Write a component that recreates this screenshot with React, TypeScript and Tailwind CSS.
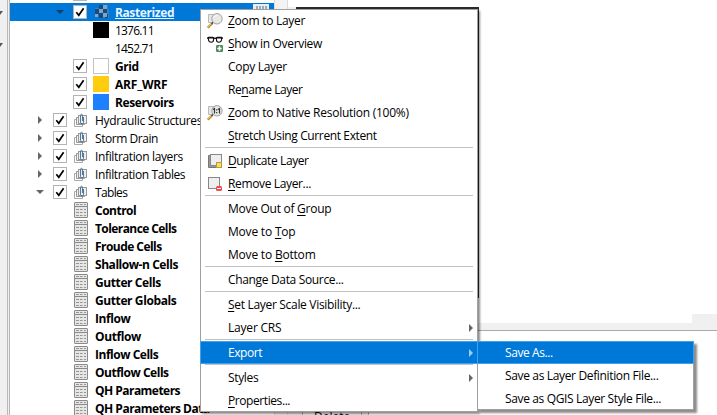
import React from "react";

type IconName = "zoom" | "glasses" | "native" | "duplicate" | "remove";

const SANS = "font-['Open_Sans','Noto_Sans',sans-serif]";

function Check() {
  return (
    <svg width="14" height="14" viewBox="0 0 14 14" className="block shrink-0">
      <rect x=".5" y=".5" width="13" height="13" fill="#fff" stroke="#b4b4b4" />
      <path d="M3.3 7.2 5.8 10.3 10.6 3.3" fill="none" stroke="#000" strokeWidth="1.7" />
    </svg>
  );
}

function RasterIcon() {
  return (
    <svg width="14" height="14" viewBox="0 0 14 14" shapeRendering="crispEdges" className="block">
      <path d="M0 3h4V0h9v4h1v9H4v-4H0z" fill="#3482c4" />
      <path d="M4 0h4v4H4zM0 4h4v5H0zM8 4h4v4H8zM4 8h4v5H4zM10 9h3v4h-3z" fill="#1d4877" />
      <path d="M8 0h4v4H8zM4 4h4v4H4zM8 8h4v4H8zM0 9h3v3H0z" fill="#76a8d0" />
    </svg>
  );
}

function GroupIcon() {
  return (
    <svg width="13" height="15" viewBox="0 0 13 15" className="block">
      <path d="M2 6.500H.5v7h8V12" fill="none" stroke="#aaa" />
      <path d="M4 4.500H2.500v7h8V10" fill="#eee" stroke="#999" />
      <rect x="4.500" y="2.500" width="8" height="8" fill="#eeeeec" stroke="#999" />
      <path d="M9.500 4v5.500c0 2-3 2-3 0V3c0-2.500 2-2.500 2 0v5" fill="none" stroke="#3f6a92" strokeWidth=".9" />
    </svg>
  );
}

function TableIcon() {
  return (
    <svg width="14" height="16" viewBox="0 0 14 16" className="block">
      <rect x=".5" y=".5" width="13" height="15" rx=".5" fill="#e6e6e4" stroke="#8a8a8a" />
      <path d="M1 4.500h12" stroke="#8a8a8a" />
      <path d="M2 2.500h3M6 2.500h2.500M10 2.500h2M2 7.500h3M6 7.500h2.500M10 7.500h2M2 10.500h3M6 10.500h2.500M10 10.500h2M2 13.500h3M6 13.500h2.500M10 13.500h2" stroke="#959595" />
    </svg>
  );
}

function MenuIcon({ name }: { name: IconName }) {
  return (
    <svg width="16" height="16" viewBox="0 0 16 16" className="block">
      {(name === "zoom" || name === "native") && (
        <>
          <path d="M1.500 1.500h6v8h-6z" fill="#e8e8e6" stroke="#b8b8b6" />
          <path d="M.8 14.700 5 10.500" stroke="#b98f24" strokeWidth="2.300" />
          <path d="M1 14 4.500 10.500" stroke="#f0c94f" strokeWidth=".9" />
          <path d="M4.500 11 6.500 9" stroke="#444" strokeWidth="1.500" />
          <circle cx="10" cy="5.800" r="5.200" fill="#e7e7e5" fillOpacity=".95" stroke="#a2a2a0" />
        </>
      )}
      {name === "zoom" && <path d="M6.500 5.500c.3-2 1.700-3 3.500-3" fill="none" stroke="#fff" />}
      {name === "native" && (
        <path d="M6 4.500 7.500 3.500v5M11 4.500l1.500-1v5M9.700 4.300v1.200M9.700 7v1.200" fill="none" stroke="#333" strokeWidth="1.200" />
      )}
      {name === "glasses" && (
        <>
          <path d="M0 2.500 1.500 1.500h4.200l2.300 1 2.300-1h4.200L16 2.500" fill="none" stroke="#111" strokeWidth="1.300" />
          <path d="M1.500 2h5v2c0 3-4.500 3-5 0zM9.500 2h5v2c-.5 3-5 3-5 0z" fill="#fff" stroke="#111" strokeWidth="1.100" />
          <rect x="9" y="9" width="7" height="7" rx="1.200" fill="#508a5c" />
          <path d="M12.500 10.300v4.400M10.300 12.500h4.400" stroke="#fff" strokeWidth="1.600" />
        </>
      )}
      {name === "duplicate" && (
        <>
          <path d="M3.500 2.500h-2v12h11v-2" fill="#999" stroke="#777" />
          <rect x="3.500" y="1.500" width="11" height="11" fill="#eee" stroke="#878787" />
          <rect x="9.500" y="9.500" width="5" height="5" fill="#f3dc78" stroke="#c29b27" />
        </>
      )}
      {name === "remove" && (
        <>
          <rect x="1.500" y="1.500" width="11" height="11" fill="#eee" stroke="#878787" />
          <rect x="9" y="10" width="6" height="5" rx="1.500" fill="#ee4a50" />
          <path d="M10 12.500h4" stroke="#fff" />
        </>
      )}
    </svg>
  );
}

function Caret({ open, dark }: { open?: boolean; dark?: boolean }) {
  return (
    <svg width="8" height="8" viewBox="0 0 8 8" className="block">
      <path d={open ? "M0 2h8L4 6z" : "M2 0v8l4-4z"} fill={dark ? "#123e67" : "#666"} />
    </svg>
  );
}

type LayerRowProps = { icon: React.ReactNode; name: string; selected?: boolean; bold?: boolean; track: string };

function LayerRow({ icon, name, selected, bold, track }: LayerRowProps) {
  return (
    <div className={`flex h-[18px] shrink-0 items-center ${selected ? "bg-[#0078d7] text-[#e8f4ff]" : ""}`}>
      <div className="flex w-[63px] shrink-0 pl-[46px]">{selected && <Caret open dark />}</div>
      <div className="w-[20px]">{bold && <Check />}</div>
      <div className="flex w-[22px] items-center">{icon}</div>
      <span className={`pt-[2px] ${bold ? "font-bold" : ""} ${selected ? "underline" : ""} ${track}`}>{name}</span>
    </div>
  );
}

function GroupRow({ name, open, track }: { name: string; open?: boolean; track: string }) {
  return (
    <div className="flex h-[18px] shrink-0 items-center">
      <div className="w-[43px] pl-[26px]"><Caret open={open} /></div>
      <div className="w-[21px]"><Check /></div>
      <div className="w-[21px]"><GroupIcon /></div>
      <span className={`pt-[2px] ${track}`}>{name}</span>
    </div>
  );
}

const tables: [string, string][] = [
  ["Control", "tracking-[-0.5px]"],
  ["Tolerance Cells", "tracking-[-0.58px]"],
  ["Froude Cells", "tracking-[-0.55px]"],
  ["Shallow-n Cells", "tracking-[-0.45px]"],
  ["Gutter Cells", "tracking-[-0.4px]"],
  ["Gutter Globals", "tracking-[-0.4px]"],
  ["Inflow", "tracking-[-0.4px]"],
  ["Outflow", "tracking-[-0.4px]"],
  ["Inflow Cells", "tracking-[-0.48px]"],
  ["Outflow Cells", "tracking-[-0.48px]"],
  ["QH Parameters", "tracking-[-0.53px]"],
  ["QH Parameters Data", "tracking-[-0.5px]"],
];

function Swatch({ color }: { color: string }) {
  return <div className={`size-4 ${color}`} />;
}

function LayerTree() {
  return (
    <div className="flex w-[264px] shrink-0 flex-col overflow-hidden bg-white">
      <div className="h-[3px] shrink-0 pl-[63px]"><div className="h-px w-[14px] bg-[#b4b4b4]" /></div>
      <LayerRow selected bold icon={<div className="pl-[2px]"><RasterIcon /></div>} name="Rasterized" track="tracking-[-0.4px]" />
      <LayerRow icon={<Swatch color="bg-black" />} name="1376.11" track="tracking-[-0.8px]" />
      <LayerRow icon={null} name="1452.71" track="tracking-[-0.8px]" />
      <LayerRow bold icon={<Swatch color="border border-[#c3c3c3] bg-white" />} name="Grid" track="tracking-[-0.4px]" />
      <LayerRow bold icon={<Swatch color="bg-[#ffcd10]" />} name="ARF_WRF" track="tracking-[-0.2px]" />
      <LayerRow bold icon={<Swatch color="bg-[#1f80ff]" />} name="Reservoirs" track="tracking-[-0.4px]" />
      <GroupRow name="Hydraulic Structures" track="tracking-[-0.34px]" />
      <GroupRow name="Storm Drain" track="tracking-[-0.45px]" />
      <GroupRow name="Infiltration layers" track="tracking-[-0.36px]" />
      <GroupRow name="Infiltration Tables" track="tracking-[-0.4px]" />
      <GroupRow name="Tables" open track="tracking-[-0.65px]" />
      {tables.map(([name, track]) => (
        <div key={name} className="flex h-[18px] shrink-0 items-center">
          <div className="w-[85px] pl-[64px]"><TableIcon /></div>
          <span className={`pt-[2px] font-bold ${track}`}>{name}</span>
        </div>
      ))}
    </div>
  );
}

type Entry = { label: string; accel?: string; icon?: IconName; arrow?: boolean; active?: boolean; track?: string };

const groups: Entry[][] = [
  [
    { label: "Zoom to Layer", accel: "Z", icon: "zoom", track: "tracking-[-0.28px]" },
    { label: "Show in Overview", accel: "S", icon: "glasses", track: "tracking-[-0.32px]" },
    { label: "Copy Layer", track: "tracking-[-0.3px]" },
    { label: "Rename Layer", accel: "n", track: "tracking-[-0.43px]" },
    { label: "Zoom to Native Resolution (100%)", accel: "Z", icon: "native", track: "tracking-[-0.26px]" },
    { label: "Stretch Using Current Extent", accel: "S", track: "tracking-[-0.38px]" },
  ],
  [
    { label: "Duplicate Layer", accel: "D", icon: "duplicate", track: "tracking-[-0.4px]" },
    { label: "Remove Layer...", accel: "R", icon: "remove", track: "tracking-[-0.36px]" },
  ],
  [
    { label: "Move Out of Group", accel: "G", track: "tracking-[-0.27px]" },
    { label: "Move to Top", accel: "T" },
    { label: "Move to Bottom", accel: "B" },
  ],
  [{ label: "Change Data Source...", track: "tracking-[-0.34px]" }],
  [
    { label: "Set Layer Scale Visibility...", accel: "S", track: "tracking-[-0.31px]" },
    { label: "Layer CRS", arrow: true },
  ],
  [{ label: "Export", arrow: true, active: true, track: "tracking-[-0.45px]" }],
  [
    { label: "Styles", arrow: true, track: "tracking-[-0.35px]" },
    { label: "Properties...", accel: "P", track: "tracking-[-0.42px]" },
  ],
];

const exportItems: Entry[] = [
  { label: "Save As...", active: true, track: "tracking-[-0.4px]" },
  { label: "Save as Layer Definition File...", track: "tracking-[-0.35px]" },
  { label: "Save as QGIS Layer Style File...", track: "tracking-[-0.36px]" },
];

function Label({ text, accel }: { text: string; accel?: string }) {
  if (!accel) return <>{text}</>;
  const at = text.indexOf(accel);
  return (
    <>
      {text.slice(0, at)}
      <span className="underline decoration-1 underline-offset-2">{accel}</span>
      {text.slice(at + 1)}
    </>
  );
}

function MenuItem({ label, accel, icon, arrow, active, track }: Entry) {
  return (
    <div className={`flex h-[23px] items-center border ${active ? "border-[#42a1ec] bg-[#0078d7] text-white" : "border-transparent"}`}>
      <div className="w-[27px] shrink-0 pl-[6px]">{icon && <MenuIcon name={icon} />}</div>
      <span className={track ?? "tracking-[-0.2px]"}><Label text={label} accel={accel} /></span>
      {arrow && (
        <svg width="4" height="8" viewBox="0 0 4 8" className="mr-[4px] ml-auto block">
          <path d="M0 0v8l4-4z" fill={active ? "#9bccf4" : "#666"} />
        </svg>
      )}
    </div>
  );
}

export default function App() {
  return (
    <div className={`relative flex h-[415px] w-[717px] overflow-hidden bg-white text-[12px] leading-[18px] whitespace-nowrap text-black ${SANS}`}>
      <div className="flex w-[10px] shrink-0 border-r border-[#b5b5b5] bg-[#f0f0f0]">
        <div className="h-full w-[8px] border-r border-[#b9b9b9] pt-[11px]">
          <svg width="3" height="36" viewBox="0 0 3 36" className="block">
            <path d="M0 0h3L0 4zM0 32h3L0 36z" fill="#555" />
          </svg>
        </div>
      </div>
      <LayerTree />
      <div className="w-[14px] shrink-0 border-x border-[#dcdcdc] bg-[#f3f3f3]" />
      <div className="flex w-[8px] shrink-0 flex-col">
        <div className="h-[7px]" />
        <div className="flex-1 bg-[#f0f0f0]" />
      </div>
      <div className="flex flex-1 flex-col">
        <div className="h-[7px] shrink-0" />
        <div className="h-[291px] w-[183px] shrink-0 border-t-2 border-r-2 border-[#2a2a2c]" />
        <div className="flex h-[25px] shrink-0 flex-col items-end pt-[16px]">
          <div className="h-[9px] w-[25px] bg-[#f0f0f0]" />
        </div>
        <div className="h-[8px] shrink-0 border-b border-[#aaa] bg-[#f0f0f0]" />
        <div className="flex pt-[79px]">
          <div className="h-[20px] w-[6px] bg-[#f0f0f0]" />
          <div className="h-[20px] w-[60px] border-x border-[#b0b0b0] bg-[#f0f0f0] pt-[2px] pl-[11px] leading-[10px]">Delete</div>
          <div className="h-[20px] w-[7px] border-r border-[#b0b0b0] bg-[#f0f0f0]" />
        </div>
      </div>

      <div className="absolute top-[4px] left-[253px] flex h-[5px] w-[16px] items-end justify-center gap-px bg-[#e9eef3]">
        {[0, 1, 2, 3].map((n) => <div key={n} className="h-[3px] w-[2px] bg-[#9aabb9]" />)}
      </div>

      <div className="absolute top-[9px] left-[200px] w-[278px] bg-white shadow-[inset_0_0_0_1px_#a0a0a0,2px_2px_2px_rgba(0,0,0,0.45)]">
        {groups.map((group, g) => (
          <div key={g}>
            {g > 0 && <div className="h-[2px] px-[5px]"><div className="h-px bg-[#c0c0c0]" /></div>}
            {group.map((entry) => <MenuItem key={entry.label} {...entry} />)}
          </div>
        ))}
      </div>

      <div className="absolute top-[341px] left-[477px] w-[217px] bg-white shadow-[inset_0_0_0_1px_#a0a0a0,3px_3px_2px_rgba(0,0,0,0.45)]">
        {exportItems.map((entry) => <MenuItem key={entry.label} {...entry} />)}
      </div>
    </div>
  );
}
